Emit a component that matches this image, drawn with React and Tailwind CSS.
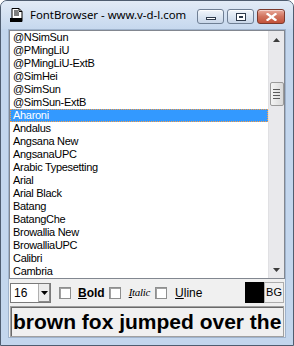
import React from "react";

const fonts = [
  "@NSimSun",
  "@PMingLiU",
  "@PMingLiU-ExtB",
  "@SimHei",
  "@SimSun",
  "@SimSun-ExtB",
  "Aharoni",
  "Andalus",
  "Angsana New",
  "AngsanaUPC",
  "Arabic Typesetting",
  "Arial",
  "Arial Black",
  "Batang",
  "BatangChe",
  "Browallia New",
  "BrowalliaUPC",
  "Calibri",
  "Cambria",
];

function AppIcon() {
  return (
    <svg width="16" height="16" viewBox="0 0 16 16" className="shrink-0">
      <path d="M3 1.5h7l3 3v10H3z" fill="#fff" stroke="#000" strokeWidth="1" />
      <path d="M10 1.5v3h3" fill="none" stroke="#000" />
      <rect x="1" y="11" width="12" height="4" fill="#000" />
      <path d="M5 4h4M5 6h5M5 8h5" stroke="#000" strokeWidth="1.2" />
    </svg>
  );
}

function CaptionButton({ kind }) {
  if (kind === "close") {
    return (
      <div className="flex h-[15px] w-[28px] items-center justify-center rounded-[3px] border border-[#7b3a2d] bg-gradient-to-b from-[#e9a99b] via-[#d0735e] to-[#c3523a] shadow-[inset_0_1px_0_rgba(255,255,255,0.5)]">
        <svg width="11" height="8" viewBox="0 0 11 8">
          <path d="M1.5 1l8 6M9.5 1l-8 6" stroke="#fff" strokeWidth="2.2" strokeLinecap="square" />
        </svg>
      </div>
    );
  }
  return (
    <div className="flex h-[15px] w-[27px] items-center justify-center rounded-[3px] border border-[#6f7f94] bg-gradient-to-b from-[#f2f6fb] via-[#dce6f2] to-[#c9d7e9] shadow-[inset_0_1px_0_rgba(255,255,255,0.8)]">
      {kind === "min" ? (
        <div className="mt-[4px] h-[3px] w-[10px] border border-[#2f3b4c] bg-white" />
      ) : (
        <div className="flex h-[8px] w-[10px] items-center justify-center border border-[#2f3b4c] bg-white">
          <div className="h-[2px] w-[4px] border border-[#2f3b4c]" />
        </div>
      )}
    </div>
  );
}

function Checkbox() {
  return <div className="h-[12px] w-[12px] shrink-0 border border-[#8e8f8f] bg-white shadow-[inset_1px_1px_0_#a0a0a0]" />;
}

function Scrollbar() {
  return (
    <div className="flex w-[16px] shrink-0 flex-col items-center border-l border-[#e0e0e3] bg-[#e9e9ec]">
      <div className="flex h-[17px] w-full items-center justify-center">
        <svg width="7" height="4" viewBox="0 0 7 4">
          <path d="M0 4L3.5 0L7 4z" fill="#3c3c3c" />
        </svg>
      </div>
      <div className="mt-[34px] flex h-[24px] w-[14px] flex-col items-center justify-center gap-[2px] rounded-[2px] border border-[#9a9a9a] bg-gradient-to-r from-[#f4f4f4] to-[#d9d9d9]">
        <div className="h-px w-[7px] bg-[#5a5a5a]" />
        <div className="h-px w-[7px] bg-[#5a5a5a]" />
        <div className="h-px w-[7px] bg-[#5a5a5a]" />
        <div className="h-px w-[7px] bg-[#5a5a5a]" />
      </div>
      <div className="flex-1" />
      <div className="flex h-[17px] w-full items-center justify-center">
        <svg width="7" height="4" viewBox="0 0 7 4">
          <path d="M0 0L3.5 4L7 0z" fill="#3c3c3c" />
        </svg>
      </div>
    </div>
  );
}

export default function App() {
  return (
    <div
      className="relative flex h-[346px] w-[294px] flex-col overflow-hidden rounded-t-[7px] border border-[#4f5d70] bg-[#c3d6ed] text-black"
      style={{ fontFamily: '"Liberation Sans", Arial, sans-serif' }}
    >
      {/* title bar */}
      <div className="flex h-[28px] shrink-0 items-center bg-gradient-to-b from-[#e2ebf6] to-[#c6d8ee] pl-[8px] pr-[8px]">
        <AppIcon />
        <span
          className="ml-[5px] text-[11.4px] text-black"
          style={{ fontFamily: '"Noto Sans", "Open Sans", sans-serif' }}
        >
          FontBrowser - www.v-d-l.com
        </span>
        <div className="ml-auto mt-[3px] flex items-center gap-[3px]">
          <CaptionButton kind="min" />
          <CaptionButton kind="max" />
          <CaptionButton kind="close" />
        </div>
      </div>

      {/* client area */}
      <div className="mx-[7px] flex flex-1 flex-col border border-[#9fb3cc] bg-[#f0f0f0]">
        {/* list */}
        <div className="flex h-[249px] shrink-0 border border-[#828790] bg-white">
          <div className="flex-1 overflow-hidden text-[11px] leading-[13px] tracking-[-0.3px]">
            {fonts.map((f) => (
              <div
                key={f}
                className={
                  f === "Aharoni"
                    ? "h-[13px] border border-dotted border-[#ff9f40] bg-[#3399ff] pl-[2px] leading-[11px] text-white"
                    : "h-[13px] whitespace-nowrap pl-[3px]"
                }
              >
                {f}
              </div>
            ))}
          </div>
          <Scrollbar />
        </div>

        {/* toolbar */}
        <div className="flex h-[27px] shrink-0 items-center pl-[1px] pr-[1px] text-[11px]">
          <div className="flex h-[20px] w-[41px] items-center border border-[#7a7a7a] bg-white">
            <span className="flex-1 pl-[3px] text-[12px]">16</span>
            <div className="flex h-full w-[12px] items-center justify-center border-l border-[#b0b0b0] bg-[#ececec] shadow-[inset_-1px_-1px_0_#8a8a8a]">
              <svg width="7" height="4" viewBox="0 0 7 4">
                <path d="M0 0L3.5 4L7 0z" fill="#000" />
              </svg>
            </div>
          </div>
          <div className="ml-[8px]">
            <Checkbox />
          </div>
          <span className="ml-[7px] text-[12px] font-bold">
            <span className="underline">B</span>old
          </span>
          <div className="ml-[4px]">
            <Checkbox />
          </div>
          <span
            className="ml-[8px] text-[11px] italic tracking-[-0.3px]"
            style={{ fontFamily: '"Liberation Serif", serif' }}
          >
            <span className="underline">I</span>talic
          </span>
          <div className="ml-[5px]">
            <Checkbox />
          </div>
          <span className="ml-[8px] text-[12px]">
            <span className="underline">U</span>line
          </span>
          <div className="ml-auto flex h-[21px] items-stretch">
            <div className="w-[19px] bg-black" />
            <div className="flex w-[20px] items-center justify-center border border-[#adadad] bg-[#f0f0f0] text-[11px]">
              BG
            </div>
          </div>
        </div>

        {/* preview */}
        <div className="mx-[1px] flex h-[31px] shrink-0 items-center overflow-hidden border border-[#a0a0a0] bg-[#f0f0f0] shadow-[inset_1px_1px_0_#696969]">
          <span className="whitespace-nowrap pl-[2px] text-[21px] font-bold leading-none">
            brown fox jumped over the
          </span>
        </div>
        <div className="flex-1" />
      </div>
      <div className="h-[7px] shrink-0" />
    </div>
  );
}
